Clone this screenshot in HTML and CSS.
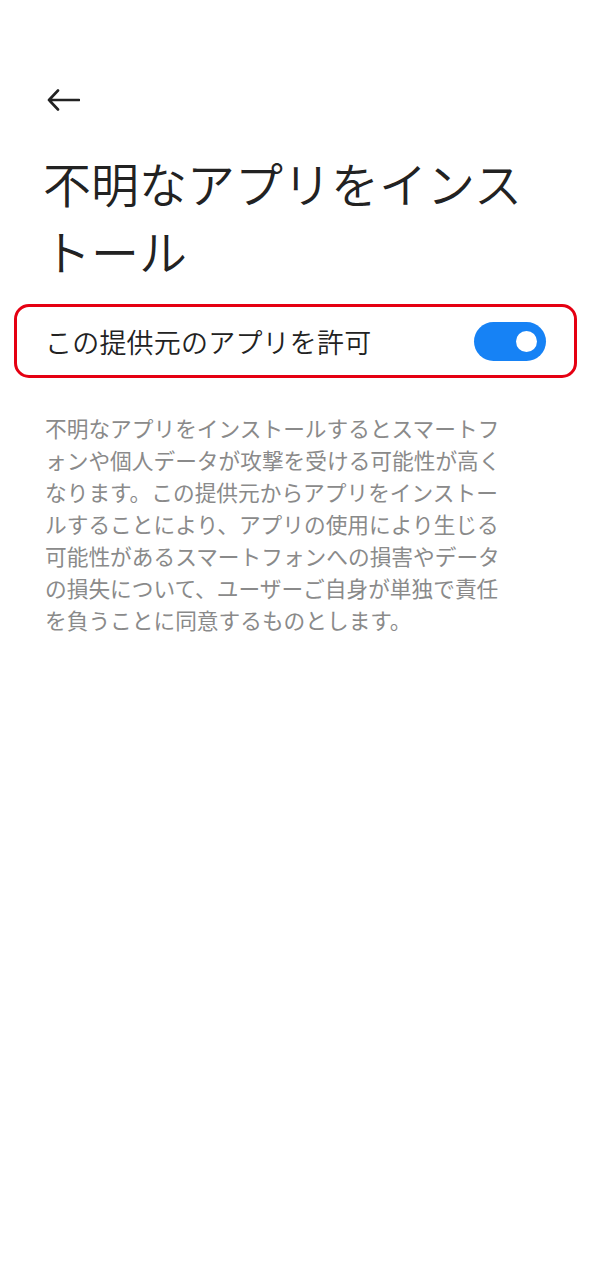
FILE: index.html
```html
<!DOCTYPE html>
<html lang="ja">

<head>
    <meta charset="utf-8">
    <link rel="stylesheet" href="styles.css">
</head>

<body>
    <div class="page">
        <div class="back">
            <svg width="34" height="24" viewBox="0 0 34 24">
                <path d="M3 12 H33 M12 2.5 L3 12 L12 21.5" fill="none" stroke="#222" stroke-width="2.6" stroke-linecap="round" stroke-linejoin="round"/>
            </svg>
        </div>
        <h1 class="title">不明なアプリをインス<br>トール</h1>

        <div class="row">
            <span class="row_label">この提供元のアプリを許可</span>
            <label class="switch">
                <input type="checkbox" checked="checked">
                <span class="knob"></span>
            </label>
        </div>

        <p class="desc">不明なアプリをインストールするとスマートフ<br>ォンや個人データが攻撃を受ける可能性が高く<br>なります。この提供元からアプリをインストー<br>ルすることにより、アプリの使用により生じる<br>可能性があるスマートフォンへの損害やデータ<br>の損失について、ユーザーご自身が単独で責任<br>を負うことに同意するものとします。</p>
    </div>
</body>

</html>
```

FILE: styles.css
```css
/* Page */

body {
    margin: 0;
    background-color: #ffffff;
    font-family: "Noto Sans CJK JP", "Noto Sans", sans-serif;
}

.page {
    padding: 0 13px 0 14px;
}

/* Back arrow */

.back {
    margin: 88px 0 0 32px;
    height: 24px;
}

.back svg {
    display: block;
}

/* Title */

.title {
    margin: 36px 0 0 29px;
    font-size: 48px;
    line-height: 68px;
    font-weight: 350;
    color: #222222;
}

/* Setting row with the red highlight */

.row {
    margin-top: 20px;
    height: 68px;
    border: 3px solid #e50012;
    border-radius: 15px;
    padding: 0 28px;
    display: flex;
    align-items: center;
    justify-content: space-between;
}

.row_label {
    font-size: 27px;
    font-weight: 350;
    color: #222222;
    letter-spacing: 0.2px;
}

/* Toggle switch */

.switch {
    position: relative;
    display: block;
    width: 72px;
    height: 39px;
    cursor: pointer;
}

.switch input {
    position: absolute;
    opacity: 0;
}

.knob {
    position: absolute;
    top: 0;
    left: 0;
    right: 0;
    bottom: 0;
    border-radius: 20px;
    background-color: #cccccc;
}

.switch input:checked ~ .knob {
    background-color: #1682f5;
}

.knob:after {
    content: "";
    position: absolute;
    top: 9px;
    left: 9px;
    width: 21px;
    height: 21px;
    border-radius: 50%;
    background-color: #ffffff;
}

.switch input:checked ~ .knob:after {
    left: 42px;
}

/* Description */

.desc {
    margin: 34px 0 0 31px;
    font-size: 21.7px;
    line-height: 32px;
    color: #8a8a8a;
}
```
